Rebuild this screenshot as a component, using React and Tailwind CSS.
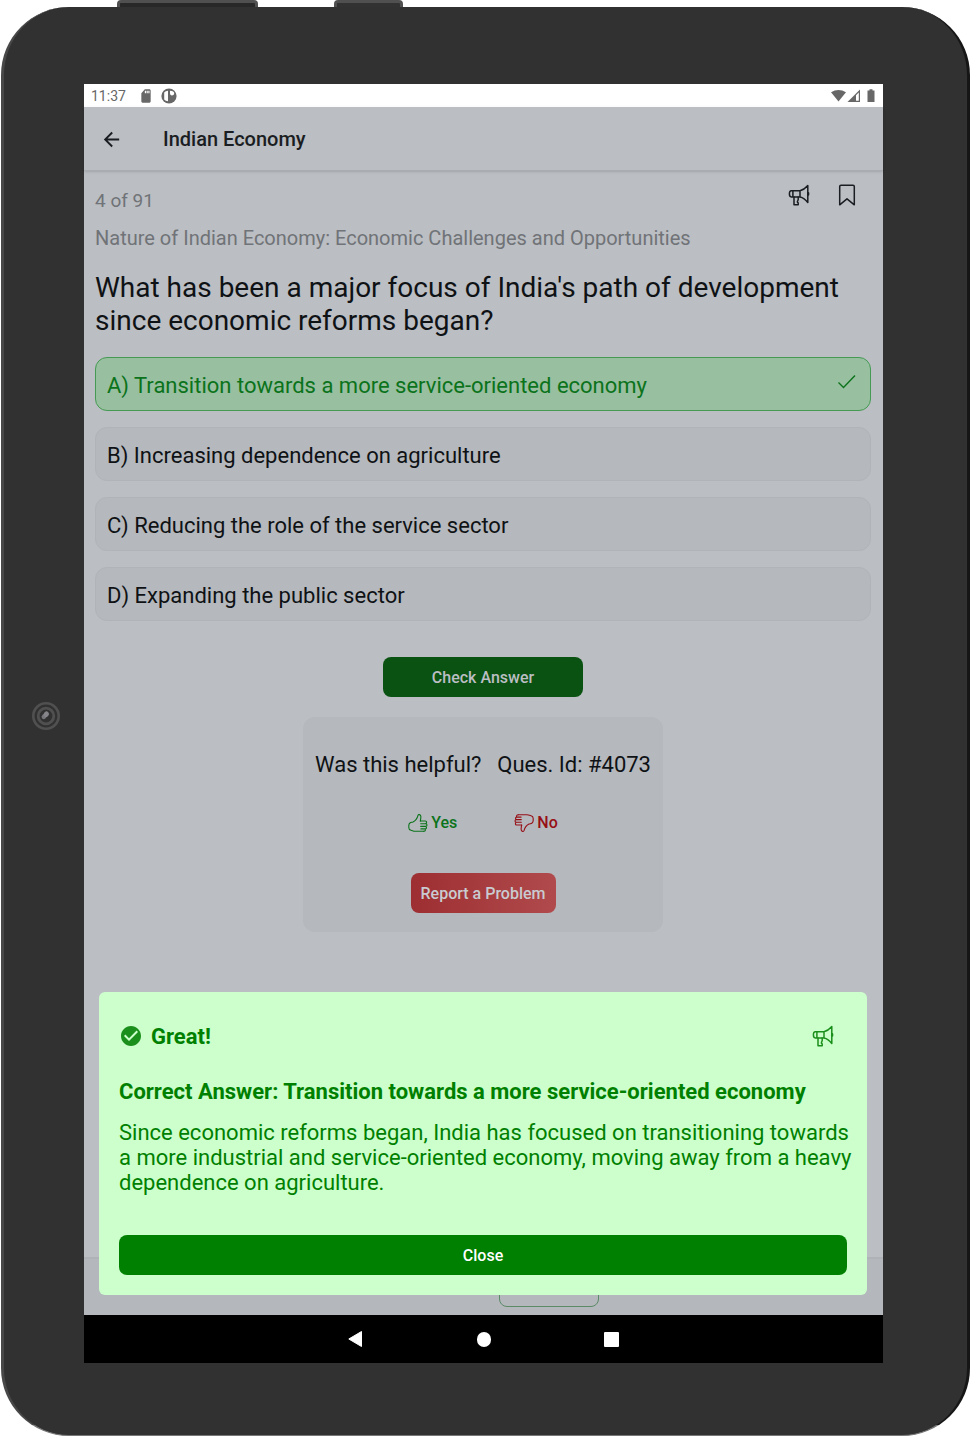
import { useState } from 'react';
import { MdArrowBack, MdCheckCircle, MdSdCard } from 'react-icons/md';
import clsx from 'clsx';

const OPTIONS = [
  { id: 'A', text: 'Transition towards a more service-oriented economy' },
  { id: 'B', text: 'Increasing dependence on agriculture' },
  { id: 'C', text: 'Reducing the role of the service sector' },
  { id: 'D', text: 'Expanding the public sector' },
];
const CORRECT = 'A';

function Megaphone({ className }) {
  return (
    <svg viewBox="0 0 24 24" className={className} fill="none" stroke="currentColor" strokeWidth="1.5" strokeLinejoin="round" strokeLinecap="round">
      <path d="M4.300 7.700h8.700v6.200H4.300c-1.100 0-1.900-1.200-1.900-3.100s.8-3.100 1.900-3.100zM5.900 7.700v6.200M13 7.700c3.200-.8 5.700-2.700 7.800-5.200v17c-2.100-2.900-4.600-5-7.800-5.600" />
      <path d="M7 13.900v7.800h4.200v-1.700c-.9-.5-1-1.400-.5-2.200.6-.9.700-1.500.5-2.300v-1.600" />
      <path d="M21.300 10v1.800" strokeWidth="2" />
    </svg>
  );
}

function BookmarkIcon() {
  return (
    <svg viewBox="0 0 24 24" className="h-6 w-6" fill="none" stroke="currentColor" strokeWidth="1.500" strokeLinejoin="round">
      <path d="M4.700 3.500c0-.8.5-1.300 1.300-1.300h12c.8 0 1.300.5 1.300 1.300v18.300L12 15.800l-7.300 6z" />
    </svg>
  );
}

function Thumb({ className }) {
  return (
    <svg viewBox="0 0 20 20" className={clsx('h-5 w-5', className)} fill="none" stroke="currentColor" strokeWidth="1.100" strokeLinejoin="round" strokeLinecap="round">
      <path d="M12.500 8c-.2-1.200.6-3 .3-4.800-.3-1.700-2.400-2.200-2.800-.9C9.300 5.100 7.500 7.700 5 8.900c-1 .4-2.100.4-2.800.9C1.300 10.400.8 11.300.8 12.400v2c0 1.500.8 2.500 2.200 2.800 1.500.3 2.200 1.100 4 1.100h8.800" />
      <path d="M12.200 8h5.100c1.800 0 1.800 2.700 0 2.700h-4.600M17.300 10.700h.4c1.700 0 1.700 2.700 0 2.700h-5M17.300 13.400c1.600 0 1.600 2.500 0 2.500h-4.400M16.500 15.900c1.500 0 1.200 2.400-.7 2.400" />
    </svg>
  );
}

function StatusBar() {
  return (
    <div className="flex h-[23px] items-center bg-white px-[7px] text-[#676767]">
      <span className="w-12 pt-0.5 text-[14px]">11:37</span>
      <MdSdCard className="h-4 w-[14px]" preserveAspectRatio="none" />
      <svg viewBox="0 0 16 16" className="ml-2 h-4 w-4">
        <circle cx="8" cy="8" r="7.600" fill="currentColor" />
        <path d="M3.200 4.500Q4.500 2.800 7 2.800v10.400Q4.500 13 3.200 11.500z" fill="#fff" />
        <path d="M9 2.800c2.700 0 4.200.9 4.200 2.400S12 7.400 10.900 7.400C9.600 7.400 9 6.500 9 5.300z" fill="#fff" />
      </svg>
      <svg viewBox="0 0 46 16" className="ml-auto h-4 w-[46px]" fill="currentColor">
        <path d="M1 4.300Q8.500-.5 16 4.300L8.500 13.500z" />
        <path d="M30 1.500V14H17.500z" />
        <path d="M26 7.200l2.800-2.800v8.400H26z" fill="#fff" />
        <path d="M37.500 2.500h2V1.300h3v1.200h2V14h-7z" />
      </svg>
    </div>
  );
}

function Options({ selected, onSelect }) {
  return (
    <div className="mt-5 flex flex-col gap-4">
      {OPTIONS.map((o) => {
        const right = selected === o.id && o.id === CORRECT;
        return (
          <button
            key={o.id}
            onClick={() => onSelect(o.id)}
            className={clsx(
              'flex h-[54px] items-center justify-between rounded-xl border px-[11px] pt-0.5 text-left text-[22px]',
              right ? 'border-[#459a53] bg-[#98bf9f] text-[#0b731b]' : 'border-[#b0b3b8] bg-[#b5b8bc] text-[#0f1215]'
            )}
          >
            <span>{o.id}) {o.text}</span>
            {right && (
              <svg viewBox="0 0 24 24" className="mb-1.5 h-6 w-6" fill="none" stroke="currentColor" strokeWidth="1.400">
                <path d="M3.500 12.500l5 5L20 5.500" />
              </svg>
            )}
          </button>
        );
      })}
    </div>
  );
}

function Feedback() {
  return (
    <section className="mx-auto mt-5 flex w-[360px] flex-col items-center rounded-xl bg-[#b5b8bc] pt-[34px] pb-[19px]">
      <div className="flex w-full justify-between px-3 text-[22px] leading-7 text-[#0f1215]">
        <p>Was this helpful?</p>
        <p>Ques. Id: #4073</p>
      </div>
      <div className="mt-8 flex gap-[57px] text-[16px] font-medium leading-6">
        <button className="flex items-center gap-[3px] text-[#0b731b]">
          <Thumb />
          Yes
        </button>
        <button className="flex items-center gap-[3px] text-[#960f16]">
          <Thumb className="rotate-180" />
          No
        </button>
      </div>
      <button className="mt-[38px] h-10 rounded-lg bg-linear-to-r from-[#9d2e32] to-[#b04a4c] px-[10px] pt-0.5 text-[16px] font-medium text-[#c9cbd0]">
        Report a Problem
      </button>
    </section>
  );
}

function AnswerSheet({ onClose }) {
  return (
    <div role="dialog" aria-label="Great!" className="absolute bottom-5 left-[15px] right-4 rounded-md bg-[#ccffcc] px-5 pt-[30px] pb-5 text-[22px] text-[#008000]">
      <div className="flex h-7 items-center">
        <MdCheckCircle className="h-6 w-6 text-[#1b8f1b]" />
        <h2 className="ml-2 font-bold">Great!</h2>
        <button aria-label="Read aloud" className="ml-auto mr-3 text-[#1b8f1b]">
          <Megaphone className="h-6 w-6" />
        </button>
      </div>
      <p className="mt-7 font-bold leading-7">Correct Answer: Transition towards a more service-oriented economy</p>
      {/* runs slightly into the side padding so the lines break late */}
      <p className="-mr-2 mt-[14px] leading-[25px]">
        Since economic reforms began, India has focused on transitioning towards a more industrial and service-oriented economy, moving away from a heavy dependence on agriculture.
      </p>
      <button onClick={onClose} className="mt-10 h-10 w-full rounded-lg bg-[#008000] pt-0.5 text-[16px] font-medium text-white">
        Close
      </button>
    </div>
  );
}

function NavBar() {
  return (
    <nav className="flex h-12 items-center justify-center gap-[104px] bg-black text-white">
      <button aria-label="Back" className="flex w-6 justify-center">
        <svg viewBox="0 0 16 18" className="h-[18px] w-4" fill="currentColor">
          <path d="M13.500 1.500v15L.8 9z" stroke="currentColor" strokeLinejoin="round" />
        </svg>
      </button>
      <button aria-label="Home" className="flex w-6 justify-center">
        <span className="h-[15px] w-[14px] rounded-full bg-white" />
      </button>
      <button aria-label="Recents" className="flex w-6 justify-center">
        <span className="h-[15px] w-[15px] rounded-[1px] bg-white" />
      </button>
    </nav>
  );
}

function CameraRing() {
  return (
    <svg viewBox="0 0 28 28" className="h-7 w-7" fill="none" stroke="#505050">
      <circle cx="14" cy="14" r="12.700" strokeWidth="2.600" />
      <circle cx="14" cy="14" r="7.800" strokeWidth="2.800" />
      <path d="M11.800 14.800l.4-.4" stroke="#77777b" strokeWidth="4.500" strokeLinecap="round" />
      <path d="M14 12.500l.5-.5" stroke="#85858a" strokeWidth="5" strokeLinecap="round" />
    </svg>
  );
}

export default function App() {
  const [selected, setSelected] = useState(CORRECT);
  const [open, setOpen] = useState(true);

  return (
    <div className="bg-white pl-px font-[Roboto,sans-serif]">
      <div className="flex h-[7px] gap-[76px] pl-[116px]">
        <div className="w-[141px] rounded-t border-3 border-b-0 border-[#505050] bg-[#282828]" />
        <div className="w-[69px] rounded-t border-3 border-b-0 border-[#505050] bg-[#323232]" />
      </div>
      <div className="flex rounded-[68px] border-l-3 border-r-3 border-b border-l-[#484848] border-r-[#161616] border-b-[#777] bg-[#313131] pt-[77px] pr-[84px] pb-[72px]">
        <div className="flex w-20 shrink-0 justify-center pt-[618px] pl-1">
          <CameraRing />
        </div>
        <div className="min-w-0 flex-1">
          <StatusBar />
          <div className="relative flex min-h-[1208px] flex-col bg-[#bbbec3]">
            <header className="flex h-16 items-center border-b border-[#a9acb1] pt-px pl-4 text-[#1a1d21] shadow-sm">
              <button aria-label="Go back" className="w-[63px]">
                <MdArrowBack className="h-[23px] w-[23px]" />
              </button>
              <h1 className="text-[20px] font-medium">Indian Economy</h1>
            </header>
            <main className="flex flex-1 flex-col pt-3 pl-[11px] pr-3">
              <div className="flex justify-between text-[#707377]">
                <p className="mt-1 text-[19px] leading-7">4 of 91</p>
                <div className="mr-3 flex gap-6 self-start text-[#1a1d21]">
                  <button aria-label="Read aloud"><Megaphone className="h-6 w-6" /></button>
                  <button aria-label="Bookmark"><BookmarkIcon /></button>
                </div>
              </div>
              <p className="mt-[9px] text-[20px] leading-7 text-[#707377]">Nature of Indian Economy: Economic Challenges and Opportunities</p>
              <h2 className="mt-[19px] text-[28px] leading-[33px] text-[#0f1215]">
                What has been a major focus of India's path of development since economic reforms began?
              </h2>
              <Options selected={selected} onSelect={setSelected} />
              <button onClick={() => setOpen(true)} className="mx-auto mt-9 h-10 w-[200px] rounded-lg bg-[#0a5211] pt-0.5 text-[16px] font-medium text-[#bbbec3]">
                Check Answer
              </button>
              <Feedback />
            </main>
            <footer className="flex h-[58px] items-end justify-center border-t-2 border-[#afb2b7] bg-[#b4b7bb] pb-2 pl-[131px]">
              <button aria-label="Next" className="h-10 w-[100px] rounded-lg border border-[#5b8a67]" />
            </footer>
            {open && <AnswerSheet onClose={() => setOpen(false)} />}
          </div>
          <NavBar />
        </div>
      </div>
    </div>
  );
}
